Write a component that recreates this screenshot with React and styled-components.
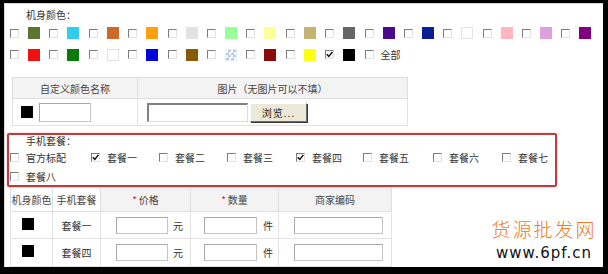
import styled, { createGlobalStyle } from "styled-components";

const GlobalStyle = createGlobalStyle`
  html, body {
    margin: 0;
    padding: 0;
    background: #000;
  }
  body {
    font-family: "Noto Sans CJK SC", "Liberation Sans", sans-serif;
    font-size: 10px;
    color: #333;
  }
`;

const Panel = styled.div`
  position: relative;
  box-sizing: border-box;
  width: 599px;
  height: 264px;
  margin: 3px 0 0 4px;
  background: #fff;
  border-top: 1px solid #d8d8d8;
  border-left: 1px solid #d8d8d8;
  overflow: hidden;
`;

const Title = styled.div`
  height: ${(p) => p.$h || 14}px;
  line-height: ${(p) => p.$h || 14}px;
  padding-left: ${(p) => p.$indent}px;
  margin-top: ${(p) => p.$top || 0}px;
  color: #333;
`;

const Box = styled.span`
  box-sizing: border-box;
  position: relative;
  display: inline-block;
  flex: none;
  width: 9px;
  height: 9px;
  background: #fff;
  border-top: 1px solid #7c7c7c;
  border-left: 1px solid #7c7c7c;
  border-right: 1px solid #e2e2e2;
  border-bottom: 1px solid #e2e2e2;

  svg {
    position: absolute;
    left: 0;
    top: 0;
  }
`;

function Check({ on }) {
  return (
    <Box>
      {on && (
        <svg width="7" height="7" viewBox="0 0 7 7">
          <path d="M0.8 3.2 L2.8 5.4 L6.4 0.9" fill="none" stroke="#111" strokeWidth="1.5" />
        </svg>
      )}
    </Box>
  );
}

const ColorRow = styled.div`
  display: flex;
  align-items: center;
  height: ${(p) => p.$h}px;
  padding-left: 5px;
`;

const ColorItem = styled.div`
  display: flex;
  align-items: center;
  flex: none;
  width: 39.4px;
`;

const Swatch = styled.span`
  box-sizing: border-box;
  display: inline-block;
  flex: none;
  width: 12px;
  height: 12px;
  margin-left: ${(p) => (p.$gap === undefined ? 9 : p.$gap)}px;
  background: ${(p) => p.$c};
  border: 1px solid ${(p) => p.$edge || p.$c};
`;

const Pattern = styled(Swatch)`
  background-color: #fff;
  background-image: conic-gradient(#b8cce6 25%, #fff 0 50%, #b8cce6 0 75%, #fff 0);
  background-size: 5px 5px;
  border-color: #e4ecf6;
`;

const AllLabel = styled.span`
  margin-left: 7px;
  white-space: nowrap;
`;

const Grid = styled.table`
  border-collapse: collapse;
  table-layout: fixed;
  margin: ${(p) => p.$top}px 0 0 ${(p) => p.$left}px;
`;

const Head = styled.th`
  box-sizing: border-box;
  width: ${(p) => p.$w}px;
  padding: 0;
  border: 1px solid #dedede;
  background: ${(p) => (p.$plain ? "#fff" : "#f3f3f3")};
  font-weight: normal;
  color: #444;
  text-align: center;
  white-space: nowrap;
`;

const Cell = styled.td`
  padding: 0 0 0 ${(p) => p.$pad || 0}px;
  border: 1px solid #e2e2e2;
  text-align: ${(p) => (p.$center ? "center" : "left")};
  white-space: nowrap;
`;

const Row = styled.tr`
  height: ${(p) => p.$h}px;
`;

const Inline = styled.div`
  display: flex;
  align-items: center;
  gap: ${(p) => p.$gap || 0}px;
`;

const TextInput = styled.input`
  box-sizing: border-box;
  width: ${(p) => p.$w}px;
  height: ${(p) => p.$h}px;
  margin: 0;
  padding: 0;
  background: #fff;
  border: 1px solid #c4c4c4;
  border-top-color: #a8a8a8;
  border-left-color: #a8a8a8;
`;

const FileInput = styled(TextInput)`
  border: 1px solid #dcdcdc;
  border-top: 2px solid #808080;
  border-left: 2px solid #808080;
`;

const Browse = styled.button`
  box-sizing: border-box;
  width: 57px;
  height: 19px;
  margin: 0 0 0 2px;
  padding: 0;
  font-family: inherit;
  font-size: 10px;
  letter-spacing: 1px;
  color: #222;
  background: #ece9d8;
  border: 1px solid #fff;
  border-right-color: #6e6e6e;
  border-bottom-color: #6e6e6e;
  box-shadow: 1px 1px 0 #3a3a3a;
`;

const Star = styled.span`
  color: #d02020;
  margin-right: 2px;
`;

const PackBox = styled.div`
  box-sizing: border-box;
  width: 550px;
  height: 54px;
  margin: 7px 0 0 2px;
  border: 2px solid #c23a3c;
  border-radius: 2px;
  box-shadow: 0 0 2px rgba(194, 58, 60, 0.45);
`;

const PackRow = styled.div`
  display: flex;
  align-items: center;
  height: ${(p) => p.$h}px;
  padding-left: 1px;
`;

const PackItem = styled.label`
  display: flex;
  align-items: center;
  flex: none;
  width: ${(p) => p.$w}px;

  span + span {
    margin-left: 7px;
  }
`;

const PackText = styled.span`
  white-space: nowrap;
`;

const Mark = styled.div`
  position: absolute;
  right: 6px;
  top: 215px;
  width: 106px;
  text-align: center;
  line-height: 1;
`;

const MarkCn = styled.div`
  font-size: 19px;
  letter-spacing: 2px;
  color: #f27a22;
  font-weight: 300;
`;

const MarkEn = styled.div`
  margin-top: 8px;
  font-family: "DejaVu Sans", sans-serif;
  font-size: 15px;
  letter-spacing: 1px;
  color: #111;
`;

const row1 = ["#5b7430", "#33ccee", "#cc6a28", "#ff9e10", "#e2e2e2", "#99ff99", "#ffff99", "#c4b474", "#666666", "#4b0a8c", "#0a1e96", "#ffffff", "#ffb6c1", "#dda0dd", "#800080"];
const row2 = ["#ee1111", "#0a7a0a", "#ffffff", "#0000dd", "#855a0a", "pattern", "#8b0a0a", "#ffff11", "#000000"];

const packs = [
  { name: "官方标配", w: 81 },
  { name: "套餐一", w: 68, on: true },
  { name: "套餐二", w: 68 },
  { name: "套餐三", w: 69 },
  { name: "套餐四", w: 67, on: true },
  { name: "套餐五", w: 70 },
  { name: "套餐六", w: 69 },
  { name: "套餐七", w: 68 },
];

const chosen = ["套餐一", "套餐四"];

function Colors() {
  const edge = (c) => (c === "#ffffff" ? "#e2e2e2" : undefined);
  return (
    <>
      <Title $indent={21} $top={4}>机身颜色：</Title>
      <ColorRow $h={22}>
        {row1.map((c, i) => (
          <ColorItem key={i}>
            <Check />
            <Swatch $c={c} $edge={edge(c)} />
          </ColorItem>
        ))}
      </ColorRow>
      <ColorRow $h={21}>
        {row2.map((c, i) => (
          <ColorItem key={i}>
            <Check on={c === "#000000"} />
            {c === "pattern" ? <Pattern $c="#fff" /> : <Swatch $c={c} $edge={edge(c)} />}
          </ColorItem>
        ))}
        <ColorItem>
          <Check />
          <AllLabel>全部</AllLabel>
        </ColorItem>
      </ColorRow>
    </>
  );
}

export default function App() {
  return (
    <>
      <GlobalStyle />
      <Panel>
        <Colors />

        <Grid $top={12} $left={7}>
          <thead>
            <Row $h={21}>
              <Head $w={125}>自定义颜色名称</Head>
              <Head $w={270}>图片（无图片可以不填）</Head>
            </Row>
          </thead>
          <tbody>
            <Row $h={27}>
              <Cell $pad={8}>
                <Inline $gap={6}>
                  <Swatch $c="#000" $gap={0} />
                  <TextInput $w={52} $h={19} />
                </Inline>
              </Cell>
              <Cell $pad={9}>
                <Inline>
                  <FileInput $w={101} $h={19} />
                  <Browse>浏览...</Browse>
                </Inline>
              </Cell>
            </Row>
          </tbody>
        </Grid>

        <PackBox>
          <Title $indent={17} $h={12}>手机套餐：</Title>
          <PackRow $h={20}>
            {packs.map((p) => (
              <PackItem key={p.name} $w={p.w}>
                <Check on={p.on} />
                <PackText>{p.name}</PackText>
              </PackItem>
            ))}
          </PackRow>
          <PackRow $h={18}>
            <PackItem $w={81}>
              <Check />
              <PackText>套餐八</PackText>
            </PackItem>
          </PackRow>
        </PackBox>

        <Grid $top={0} $left={5}>
          <thead>
            <Row $h={24}>
              <Head $w={42} $plain>机身颜色</Head>
              <Head $w={48} $plain>手机套餐</Head>
              <Head $w={90}><Star>*</Star>价格</Head>
              <Head $w={88}><Star>*</Star>数量</Head>
              <Head $w={113}>商家编码</Head>
            </Row>
          </thead>
          <tbody>
            {chosen.map((name, i) => (
              <Row key={name} $h={i === 0 ? 27 : 28}>
                <Cell $pad={11}>
                  <Swatch $c="#000" $gap={0} />
                </Cell>
                <Cell $center>{name}</Cell>
                <Cell $pad={15}>
                  <Inline $gap={5}>
                    <TextInput $w={52} $h={17} />
                    <span>元</span>
                  </Inline>
                </Cell>
                <Cell $pad={13}>
                  <Inline $gap={6}>
                    <TextInput $w={53} $h={17} />
                    <span>件</span>
                  </Inline>
                </Cell>
                <Cell $pad={15}>
                  <TextInput $w={89} $h={17} />
                </Cell>
              </Row>
            ))}
          </tbody>
        </Grid>

        <Mark>
          <MarkCn>货源批发网</MarkCn>
          <MarkEn>www.6pf.cn</MarkEn>
        </Mark>
      </Panel>
    </>
  );
}
